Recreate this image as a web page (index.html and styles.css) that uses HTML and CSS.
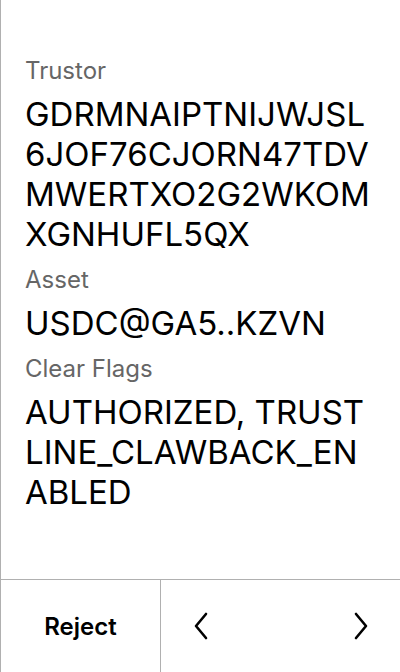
FILE: index.html
```html
<!DOCTYPE html>
<html>
<head>
<meta charset="utf-8">
<link rel="stylesheet" href="styles.css">
</head>
<body>
<div class="screen">
  <div class="content">
    <div class="field">
      <div class="label">Trustor</div>
      <div class="value">GDRMNAIPTNIJWJSL6JOF76CJORN47TDVMWERTXO2G2WKOMXGNHUFL5QX</div>
    </div>
    <div class="field">
      <div class="label">Asset</div>
      <div class="value">USDC@GA5..KZVN</div>
    </div>
    <div class="field">
      <div class="label">Clear Flags</div>
      <div class="value">AUTHORIZED, TRUSTLINE_CLAWBACK_ENABLED</div>
    </div>
  </div>
  <div class="footer">
    <div class="reject">Reject</div>
    <div class="nav">
      <svg class="chev" width="16" height="28" viewBox="0 0 16 28"><path d="M13 2 L3 14 L13 26" fill="none" stroke="#000" stroke-width="2.6" stroke-linecap="round" stroke-linejoin="round"/></svg>
      <svg class="chev" width="16" height="28" viewBox="0 0 16 28"><path d="M3 2 L13 14 L3 26" fill="none" stroke="#000" stroke-width="2.6" stroke-linecap="round" stroke-linejoin="round"/></svg>
    </div>
  </div>
</div>
</body>
</html>
```
FILE: styles.css
```css
html, body {
  margin: 0;
  padding: 0;
  background: #fff;
}
body {
  font-family: Inter, "Noto Sans", sans-serif;
  color: #000;
}
.screen {
  width: 400px;
  height: 672px;
  box-sizing: border-box;
  border-left: 1px solid #b0b0b0;
  display: flex;
  flex-direction: column;
}
.content {
  flex: 1;
  padding: 57px 24px 0 24px;
}
.field + .field {
  margin-top: 12px;
}
.label {
  font-size: 24px;
  line-height: 28px;
  color: #666;
}
.value {
  margin-top: 9px;
  font-size: 33px;
  line-height: 40px;
  word-break: break-all;
}
.footer {
  height: 92px;
  border-top: 1px solid #b0b0b0;
  display: flex;
}
.reject {
  width: 159px;
  border-right: 1px solid #b0b0b0;
  display: flex;
  align-items: center;
  justify-content: center;
  font-size: 24px;
  font-weight: 600;
}
.nav {
  flex: 1;
  display: flex;
  align-items: center;
  justify-content: space-between;
  padding: 0 31px 0 32px;
}
```
